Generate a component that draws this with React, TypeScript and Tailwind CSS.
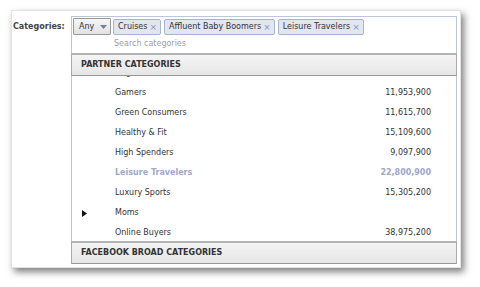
import React from "react";

const rows = [
  { name: "Dog Owners", count: "12,460,300" },
  { name: "Gamers", count: "11,953,900" },
  { name: "Green Consumers", count: "11,615,700" },
  { name: "Healthy & Fit", count: "15,109,600" },
  { name: "High Spenders", count: "9,097,900" },
  { name: "Leisure Travelers", count: "22,800,900", selected: true },
  { name: "Luxury Sports", count: "15,305,200" },
  { name: "Moms", count: "", parent: true },
  { name: "Online Buyers", count: "38,975,200" },
];

const chips = ["Cruises", "Affluent Baby Boomers", "Leisure Travelers"];

const SectionHeader = ({ label }: { label: string }) => (
  <div className="-mx-px h-[23px] flex items-center border-x border-t-2 border-b border-t-[#b4b4b4] border-b-[#999] border-x-[#aaa] bg-gradient-to-b from-[#f4f4f4] to-[#e6e6e6] pl-[9px] text-[8px] font-bold text-[#333]">
    {label}
  </div>
);

export default function App() {
  return (
    <div className="w-[480px] h-[287px] bg-white pt-[10px] pl-[11px]" style={{ fontFamily: '"DejaVu Sans", Verdana, sans-serif' }}>
      <div className="w-[450px] h-[258px] bg-white border border-[#e2e2e2] shadow-[3px_4px_7px_rgba(0,0,0,0.5)] flex pt-[5px] pl-[1px] pr-[3px] pb-[3px]">
        <div className="w-[58px] pt-[5px] text-[8px] font-bold text-[#444]">Categories:</div>

        <div className="flex-1 flex flex-col border-x border-t border-[#bdc7d8]">
          {/* token input */}
          <div className="flex items-start gap-[2px] pt-[1px] pl-[1px] h-[36px]">
            <button className="h-[17px] w-[38px] flex items-center gap-[6px] pl-[5px] border border-[#999] rounded-[1px] bg-gradient-to-b from-[#f6f6f6] to-[#e2e2e2] text-[8px] text-[#333]">
              Any
              <svg width="7" height="4" viewBox="0 0 7 4">
                <path d="M0 0h7L3.5 4z" fill="#6f80a6" />
              </svg>
            </button>
            <div className="flex-1 flex flex-wrap gap-x-[3px] gap-y-[1px]">
              {chips.map((c) => (
                <span key={c} className="h-[16px] mt-[1px] flex items-center gap-[2px] pl-[4px] pr-[3px] border border-[#a8b4cf] rounded-[2px] bg-[#e2e6f0] text-[8px] text-[#333]">
                  {c}
                  <span className="text-[9px] leading-none text-[#8797bb]">×</span>
                </span>
              ))}
              <div className="w-full pl-[1px] pt-[2px] text-[8px] text-[#a0a0a0]">Search categories</div>
            </div>
          </div>

          <SectionHeader label="PARTNER CATEGORIES" />

          <div className="flex-1 overflow-hidden">
            <div className="-mt-[13px]">
              {rows.map((r) => (
                <div
                  key={r.name}
                  className={`h-[20px] flex items-center text-[8px] ${r.selected ? "text-[#9ea8c8] font-bold" : "text-[#333]"}`}
                >
                  <div className="w-[43px] flex justify-start pl-[10px]">
                    {r.parent && (
                      <svg width="5" height="7" viewBox="0 0 5 7">
                        <path d="M0 0l5 3.5L0 7z" fill="#111" />
                      </svg>
                    )}
                  </div>
                  <div className="flex-1">{r.name}</div>
                  <div className="pr-[25px]">{r.count}</div>
                </div>
              ))}
            </div>
          </div>

          <SectionHeader label="FACEBOOK BROAD CATEGORIES" />
        </div>
      </div>
    </div>
  );
}
